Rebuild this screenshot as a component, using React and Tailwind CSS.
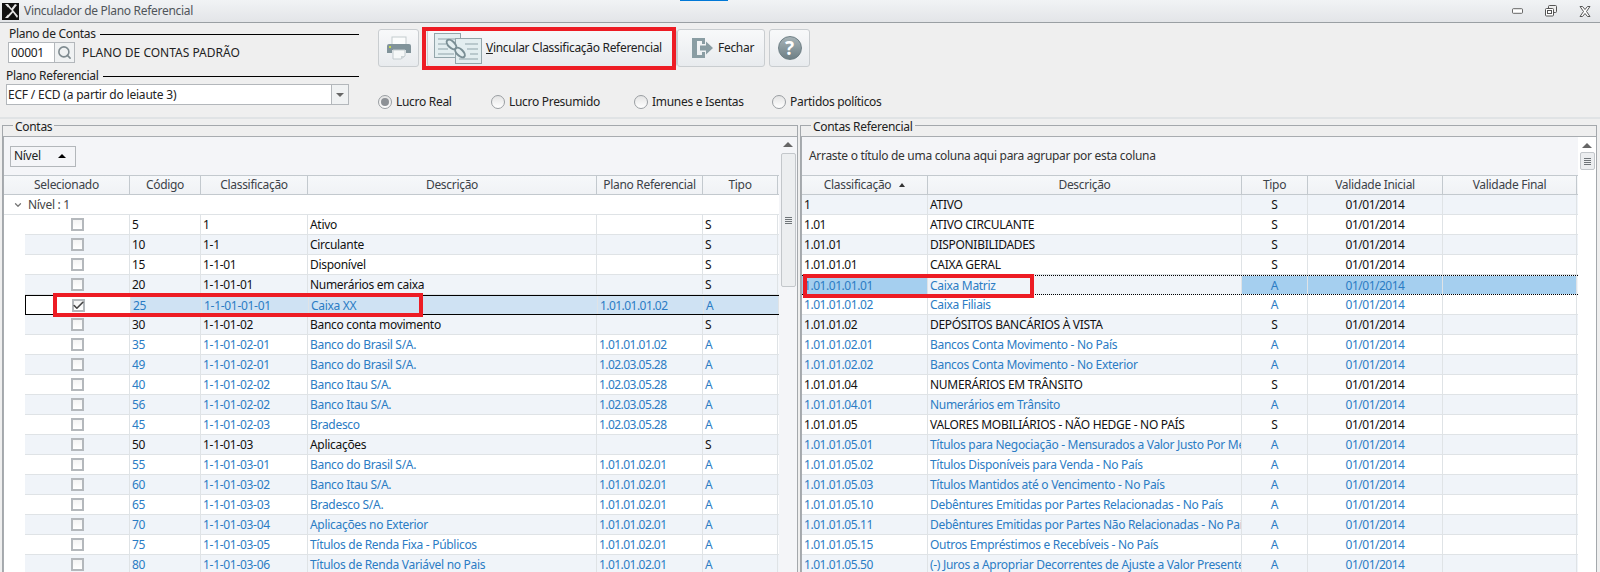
import React from "react";
import { Check, ChevronDown, Search } from "lucide-react";

const contas = [
  ["5", "1", "Ativo", "", "S"],
  ["10", "1-1", "Circulante", "", "S"],
  ["15", "1-1-01", "Disponível", "", "S"],
  ["20", "1-1-01-01", "Numerários em caixa", "", "S"],
  ["25", "1-1-01-01-01", "Caixa XX", "1.01.01.01.02", "A"],
  ["30", "1-1-01-02", "Banco conta movimento", "", "S"],
  ["35", "1-1-01-02-01", "Banco do Brasil S/A.", "1.01.01.01.02", "A"],
  ["49", "1-1-01-02-01", "Banco do Brasil S/A.", "1.02.03.05.28", "A"],
  ["40", "1-1-01-02-02", "Banco Itau S/A.", "1.02.03.05.28", "A"],
  ["56", "1-1-01-02-02", "Banco Itau S/A.", "1.02.03.05.28", "A"],
  ["45", "1-1-01-02-03", "Bradesco", "1.02.03.05.28", "A"],
  ["50", "1-1-01-03", "Aplicações", "", "S"],
  ["55", "1-1-01-03-01", "Banco do Brasil S/A.", "1.01.01.02.01", "A"],
  ["60", "1-1-01-03-02", "Banco Itau S/A.", "1.01.01.02.01", "A"],
  ["65", "1-1-01-03-03", "Bradesco S/A.", "1.01.01.02.01", "A"],
  ["70", "1-1-01-03-04", "Aplicações no Exterior", "1.01.01.02.01", "A"],
  ["75", "1-1-01-03-05", "Títulos de Renda Fixa - Públicos", "1.01.01.02.01", "A"],
  ["80", "1-1-01-03-06", "Títulos de Renda Variável no Pais", "1.01.01.02.01", "A"],
];

const referencial = [
  ["1", "ATIVO", "S"],
  ["1.01", "ATIVO CIRCULANTE", "S"],
  ["1.01.01", "DISPONIBILIDADES", "S"],
  ["1.01.01.01", "CAIXA GERAL", "S"],
  ["1.01.01.01.01", "Caixa Matriz", "A"],
  ["1.01.01.01.02", "Caixa Filiais", "A"],
  ["1.01.01.02", "DEPÓSITOS BANCÁRIOS À VISTA", "S"],
  ["1.01.01.02.01", "Bancos Conta Movimento - No País", "A"],
  ["1.01.01.02.02", "Bancos Conta Movimento - No Exterior", "A"],
  ["1.01.01.04", "NUMERÁRIOS EM TRÂNSITO", "S"],
  ["1.01.01.04.01", "Numerários em Trânsito", "A"],
  ["1.01.01.05", "VALORES MOBILIÁRIOS - NÃO HEDGE - NO PAÍS", "S"],
  ["1.01.01.05.01", "Títulos para Negociação - Mensurados a Valor Justo Por Meio", "A"],
  ["1.01.01.05.02", "Títulos Disponíveis para Venda - No País", "A"],
  ["1.01.01.05.03", "Títulos Mantidos até o Vencimento - No País", "A"],
  ["1.01.01.05.10", "Debêntures Emitidas por Partes Relacionadas - No País", "A"],
  ["1.01.01.05.11", "Debêntures Emitidas por Partes Não Relacionadas - No País", "A"],
  ["1.01.01.05.15", "Outros Empréstimos e Recebíveis - No País", "A"],
  ["1.01.01.05.50", "(-) Juros a Apropriar Decorrentes de Ajuste a Valor Presente", "A"],
];

const leftCols = "grid grid-cols-[126px_71px_107px_289px_106px_75px]";
const leftRowCols = "grid grid-cols-[105px_71px_107px_289px_106px_75px]";
const rightCols = "grid grid-cols-[126px_314px_66px_135px_134px]";
const cell = "h-full overflow-hidden whitespace-nowrap border-r border-[#dfe3e6] px-[2px] leading-[19px]";

function HeaderCell({ children }) {
  return (
    <div className="flex h-full items-center justify-center border-r border-[#c3c9ce] text-[#3c4248] whitespace-nowrap">
      {children}
    </div>
  );
}

function CheckBox({ checked }) {
  return (
    <div className="flex h-[13px] w-[13px] items-center justify-center border-2 border-[#b4b8bc] bg-gradient-to-b from-[#f4f4f4] to-white">
      {checked && <Check className="h-[13px] w-[13px] shrink-0 text-[#444]" strokeWidth={3} />}
    </div>
  );
}

function Radio({ label, checked, className }) {
  return (
    <div className={`flex items-center gap-[4px] ${className}`}>
      <div className="flex h-[14px] w-[14px] items-center justify-center rounded-full border border-[#9a9ea2] bg-gradient-to-b from-[#e4e4e4] to-white">
        {checked && <div className="h-[8px] w-[8px] rounded-full bg-[#8d9196]" />}
      </div>
      <span>{label}</span>
    </div>
  );
}

function GroupLabel({ label, className }) {
  return (
    <div className={`flex items-center ${className}`}>
      <span className="leading-[16px] text-[#222]">{label}</span>
      <div className="ml-[4px] h-[1px] flex-1 bg-black" />
    </div>
  );
}

function Grip() {
  return (
    <svg viewBox="0 0 7 7" className="h-[7px] w-[7px]">
      <path d="M0 0.5 H7 M0 2.5 H7 M0 4.5 H7 M0 6.5 H7" stroke="#6f7478" />
    </svg>
  );
}

function Logo() {
  return (
    <svg viewBox="0 0 17 17" className="h-[17px] w-[17px]">
      <rect width="17" height="17" fill="#111" />
      <path d="M3 1 L9 8 L3 15 L6 15 L11 9.5 L15 15 L16 13 L11 7 L15 2 L13 1 L9.5 5.5 L6 1 Z" fill="#e6e6e6" />
      <path d="M6 4 L10 8 L6 12 Z" fill="#111" />
    </svg>
  );
}

function WindowButtons() {
  return (
    <div className="flex items-center gap-[22px] pr-[9px]">
      <svg viewBox="0 0 12 6" className="h-[6px] w-[11px]">
        <rect x="0.5" y="0.5" width="11" height="5" rx="1" fill="#fff" stroke="#555" />
      </svg>
      <svg viewBox="0 0 12 12" className="h-[12px] w-[12px]">
        <rect x="3.5" y="0.5" width="8" height="7" rx="1" fill="#eee" stroke="#555" />
        <rect x="0.5" y="3.5" width="8" height="7.5" rx="1" fill="#fff" stroke="#555" />
        <rect x="2.5" y="5.5" width="4" height="3" fill="none" stroke="#555" />
      </svg>
      <svg viewBox="0 0 12 11" className="h-[11px] w-[12px]">
        <path d="M1 0.5 L3.5 0.5 L6 3.5 L8.5 0.5 L11 0.5 L7.5 5.5 L11 10.5 L8.5 10.5 L6 7.5 L3.5 10.5 L1 10.5 L4.5 5.5 Z" fill="#fff" stroke="#555" />
      </svg>
    </div>
  );
}

function PrinterIcon() {
  return (
    <svg viewBox="0 0 26 24" className="h-[24px] w-[26px]">
      <rect x="6" y="1" width="14" height="9" fill="#fbfcfc" stroke="#c3cbce" />
      <path d="M3 8 H23 a2 2 0 0 1 2 2 V17 H20 V14 H6 V17 H1 V10 a2 2 0 0 1 2 -2 Z" fill="#81939a" />
      <rect x="3" y="10" width="2" height="2" fill="#c6d94e" />
      <path d="M7 14 H19 V20 L15 23 H7 Z" fill="#f6f8f8" stroke="#c3cbce" />
      <path d="M15 23 V20 H19 Z" fill="#ccd3d6" />
    </svg>
  );
}

function LinkIcon() {
  return (
    <svg viewBox="0 0 48 31" className="h-[31px] w-[48px]">
      <rect x="0.5" y="0.5" width="26" height="24" fill="#e3eef0" stroke="#93a5aa" />
      <path d="M4 6 H23 M4 11 H12 M4 16 H14 M4 21 H20" stroke="#8fa3a9" />
      <rect x="21.5" y="5.5" width="26" height="25" fill="#e3eef0" stroke="#93a5aa" />
      <path d="M31 11 H44 M33 16 H44 M36 21 H44 M25 26 H44" stroke="#8fa3a9" />
      <ellipse cx="17.5" cy="11.5" rx="6" ry="3.2" transform="rotate(45 17.5 11.5)" fill="#e3eef0" stroke="#7a8f95" strokeWidth="2" />
      <ellipse cx="26" cy="19.5" rx="6" ry="3.2" transform="rotate(45 26 19.5)" fill="#e3eef0" stroke="#7a8f95" strokeWidth="2" />
    </svg>
  );
}

function ExitIcon() {
  return (
    <svg viewBox="0 0 22 22" className="h-[22px] w-[22px]">
      <path d="M1 1 H14 V7 H11 V4 H6 V18 H11 V15 H14 V21 H1 Z" fill="#8a9da3" />
      <path d="M9 8.5 H15 V4.5 L22 11 L15 17.5 V13.5 H9 Z" fill="#8a9da3" />
    </svg>
  );
}

export default function App() {
  return (
    <div className="relative flex h-[572px] w-[1600px] flex-col overflow-hidden bg-[#efefef] font-['Noto_Sans','Open_Sans',sans-serif] text-[12px] tracking-[-0.3px] text-[#222]">
      {/* Title bar */}
      <div className="relative flex h-[23px] shrink-0 items-center justify-between border-b border-[#9a9fa3] bg-gradient-to-b from-[#f1f3f5] to-[#e3e5e8] pl-[2px]">
        <div className="flex items-center gap-[5px]">
          <Logo />
          <span className="text-[#50555a]">Vinculador de Plano Referencial</span>
        </div>
        <WindowButtons />
        <div className="absolute left-[680px] top-0 h-[1px] w-[48px] bg-[#0078d7]" />
      </div>

      {/* Toolbar */}
      <div className="flex h-[94px] shrink-0">
        <div className="w-[378px] shrink-0 pl-[6px] pr-[19px]">
          <GroupLabel label="Plano de Contas" className="ml-[3px] mt-[3px] h-[16px]" />
          <div className="ml-[2px] flex h-[21px] items-center">
            <div className="flex h-full w-[47px] items-center border border-[#b3b7bb] bg-white px-[2px]">00001</div>
            <div className="flex h-full w-[20px] items-center justify-center border border-l-0 border-[#b3b7bb] bg-[#f0f2f3]">
              <Search className="h-[15px] w-[15px] text-[#7f8b90]" strokeWidth={2.5} />
            </div>
            <span className="ml-[7px] whitespace-nowrap tracking-normal">PLANO DE CONTAS PADRÃO</span>
          </div>
          <GroupLabel label="Plano Referencial" className="mt-[5px] h-[16px]" />
          <div className="mr-[10px] flex h-[21px] items-center border border-[#b3b7bb] bg-white">
            <span className="flex-1 px-[1px] tracking-[-0.2px]">ECF / ECD (a partir do leiaute 3)</span>
            <div className="flex h-full w-[17px] items-center justify-center border-l border-[#b3b7bb] bg-[#f0f2f3]">
              <div className="h-0 w-0 border-x-[4px] border-t-[4px] border-x-transparent border-t-[#666]" />
            </div>
          </div>
        </div>
        <div>
          <div className="mt-[6px] flex h-[38px] items-stretch">
            <button className="flex w-[41px] items-center justify-center rounded-[3px] border border-[#c9cdd0] bg-gradient-to-b from-[#f8f9fa] to-[#e8ebee]">
              <PrinterIcon />
            </button>
            <button className="ml-[8px] flex w-[250px] items-center rounded-[3px] border border-[#c9cdd0] bg-gradient-to-b from-[#f8f9fa] to-[#e8ebee] pl-[6px]">
              <LinkIcon />
              <span className="ml-[4px] whitespace-nowrap"><u>V</u>incular Classificação Referencial</span>
            </button>
            <button className="flex w-[88px] items-center rounded-[3px] border border-[#c9cdd0] bg-gradient-to-b from-[#f8f9fa] to-[#e8ebee] pl-[13px]">
              <ExitIcon />
              <span className="ml-[5px]">Fechar</span>
            </button>
            <button className="ml-[4px] flex w-[41px] items-center justify-center rounded-[3px] border border-[#c9cdd0] bg-gradient-to-b from-[#f8f9fa] to-[#e8ebee]">
              <div className="flex h-[24px] w-[24px] items-center justify-center rounded-full border border-[#6f8086] bg-gradient-to-b from-[#a7b3b7] to-[#6e7f85] text-[19px] font-bold leading-none text-white">?</div>
            </button>
          </div>
          <div className="mt-[26px] flex h-[18px] items-center">
            <Radio label="Lucro Real" checked className="w-[113px]" />
            <Radio label="Lucro Presumido" className="w-[143px]" />
            <Radio label="Imunes e Isentas" className="w-[138px]" />
            <Radio label="Partidos políticos" />
          </div>
        </div>
      </div>
      <div className="h-[2px] shrink-0 bg-[#e0e3e5]" />

      {/* Painéis */}
      <div className="flex min-h-0 flex-1 gap-[2px] pl-[2px] pr-[3px] pt-[6px]">
        {/* Contas */}
        <div className="relative flex w-[796px] shrink-0 flex-col border-l border-r border-t border-[#a4a8ac] pt-[10px]">
          <span className="absolute left-[10px] top-[-7px] bg-[#efefef] px-[2px] leading-[16px]">Contas</span>
          <div className="flex min-h-0 flex-1 flex-col border-l border-t border-[#a8acb0] bg-[#f4f5f8]">
            <div className="flex min-h-0 flex-1">
              <div className="w-[775px] shrink-0">
                <div className="flex h-[38px] items-center pl-[6px]">
                  <div className="flex h-[21px] w-[66px] items-center justify-between border border-[#b3b7bb] pl-[3px] pr-[9px]">
                    <span>Nível</span>
                    <div className="h-0 w-0 border-x-[4px] border-b-[4px] border-x-transparent border-b-black" />
                  </div>
                </div>
                <div className={`${leftCols} h-[20px] border-y border-[#c3c9ce] bg-gradient-to-b from-[#f6f8fa] to-[#f0f2f5]`}>
                  {["Selecionado", "Código", "Classificação", "Descrição", "Plano Referencial", "Tipo"].map((h) => (
                    <HeaderCell key={h}>{h}</HeaderCell>
                  ))}
                </div>
                <div className="bg-white">
                  <div className="flex h-[20px] items-center border-b border-[#dfe3e6] pl-[9px] text-[#444]">
                    <ChevronDown className="h-[10px] w-[10px] text-[#777]" strokeWidth={3} />
                    <span className="ml-[5px]">Nível : 1</span>
                  </div>
                  {contas.map((c, i) => {
                    const selected = c[0] === "25";
                    const color = c[4] === "A" ? "text-[#2b7cc4]" : "text-[#111]";
                    const bg = selected ? "bg-[#cfe2f3]" : i % 2 === 1 ? "bg-[#f0f4f9]" : "bg-white";
                    return (
                      <div
                        key={c[0]}
                        className={`${leftRowCols} ml-[21px] h-[20px] ${bg} ${color} ${selected ? "border border-black" : "border-b border-[#dfe3e6]"}`}
                      >
                        <div className={`flex h-full items-center justify-center border-r border-[#dfe3e6] ${selected ? "bg-white" : ""}`}>
                          <CheckBox checked={selected} />
                        </div>
                        {c.map((v, j) => (
                          <div key={j} className={`${cell} ${j === 3 ? "tracking-[-0.55px]" : ""}`}>{v}</div>
                        ))}
                      </div>
                    );
                  })}
                </div>
              </div>
              <div className="flex w-[18px] shrink-0 flex-col items-center pt-[5px]">
                <div className="h-0 w-0 border-x-[5px] border-b-[5px] border-x-transparent border-b-[#666]" />
                <div className="mt-[6px] flex h-[134px] w-[15px] items-center justify-center rounded-[2px] border border-[#c3c7cb] bg-[#eceef0]">
                  <Grip />
                </div>
              </div>
            </div>
          </div>
        </div>

        {/* Contas Referencial */}
        <div className="relative flex min-w-0 flex-1 flex-col border-l border-r border-t border-[#a4a8ac] pt-[10px]">
          <span className="absolute left-[10px] top-[-7px] bg-[#efefef] px-[2px] leading-[16px]">Contas Referencial</span>
          <div className="flex min-h-0 flex-1 flex-col border-l border-t border-[#a8acb0] bg-[#f4f5f8]">
            <div className="flex min-h-0 flex-1">
              <div className="w-[776px] shrink-0">
                <div className="flex h-[38px] items-center pl-[7px] text-[#333]">
                  Arraste o título de uma coluna aqui para agrupar por esta coluna
                </div>
                <div className={`${rightCols} h-[20px] border-y border-[#c3c9ce] bg-gradient-to-b from-[#f6f8fa] to-[#f0f2f5]`}>
                  <div className="flex h-full items-center justify-center gap-[8px] border-r border-[#c3c9ce] text-[#3c4248]">
                    <span>Classificação</span>
                    <div className="h-0 w-0 border-x-[3px] border-b-[4px] border-x-transparent border-b-[#333]" />
                  </div>
                  {["Descrição", "Tipo", "Validade Inicial", "Validade Final"].map((h) => (
                    <HeaderCell key={h}>{h}</HeaderCell>
                  ))}
                </div>
                <div className="bg-white">
                  {referencial.map((r, i) => {
                    const selected = r[0] === "1.01.01.01.01";
                    const color = r[2] === "A" ? "text-[#2b7cc4]" : "text-[#111]";
                    const bg = i % 2 === 0 ? "bg-[#f0f4f9]" : "bg-white";
                    const mark = selected ? "bg-[#a5cfef]" : "";
                    return (
                      <div
                        key={r[0]}
                        className={`${rightCols} h-[20px] ${bg} ${color} ${selected ? "border-y border-dotted border-black" : "border-b border-[#dfe3e6]"}`}
                      >
                        <div className={`${cell} tracking-[-0.45px] ${mark}`}>{r[0]}</div>
                        <div className={cell}>{r[1]}</div>
                        <div className={`${cell} text-center ${mark}`}>{r[2]}</div>
                        <div className={`${cell} text-center tracking-[-0.5px] ${mark}`}>01/01/2014</div>
                        <div className={`${cell} ${mark}`} />
                      </div>
                    );
                  })}
                </div>
              </div>
              <div className="flex w-[18px] shrink-0 flex-col items-center bg-white pt-[6px]">
                <div className="h-0 w-0 border-x-[5px] border-b-[5px] border-x-transparent border-b-[#666]" />
                <div className="mt-[4px] flex h-[18px] w-[15px] items-center justify-center rounded-[2px] border border-[#c3c7cb] bg-[#eceef0]">
                  <Grip />
                </div>
              </div>
            </div>
          </div>
        </div>
      </div>

      {/* Marcações em vermelho */}
      <div className="absolute left-[422px] top-[27px] h-[43px] w-[254px] border-4 border-[#ed1c24]" />
      <div className="absolute left-[53px] top-[293px] h-[24px] w-[370px] border-4 border-[#ed1c24]" />
      <div className="absolute left-[803px] top-[274px] h-[24px] w-[231px] border-4 border-[#ed1c24]" />
    </div>
  );
}
